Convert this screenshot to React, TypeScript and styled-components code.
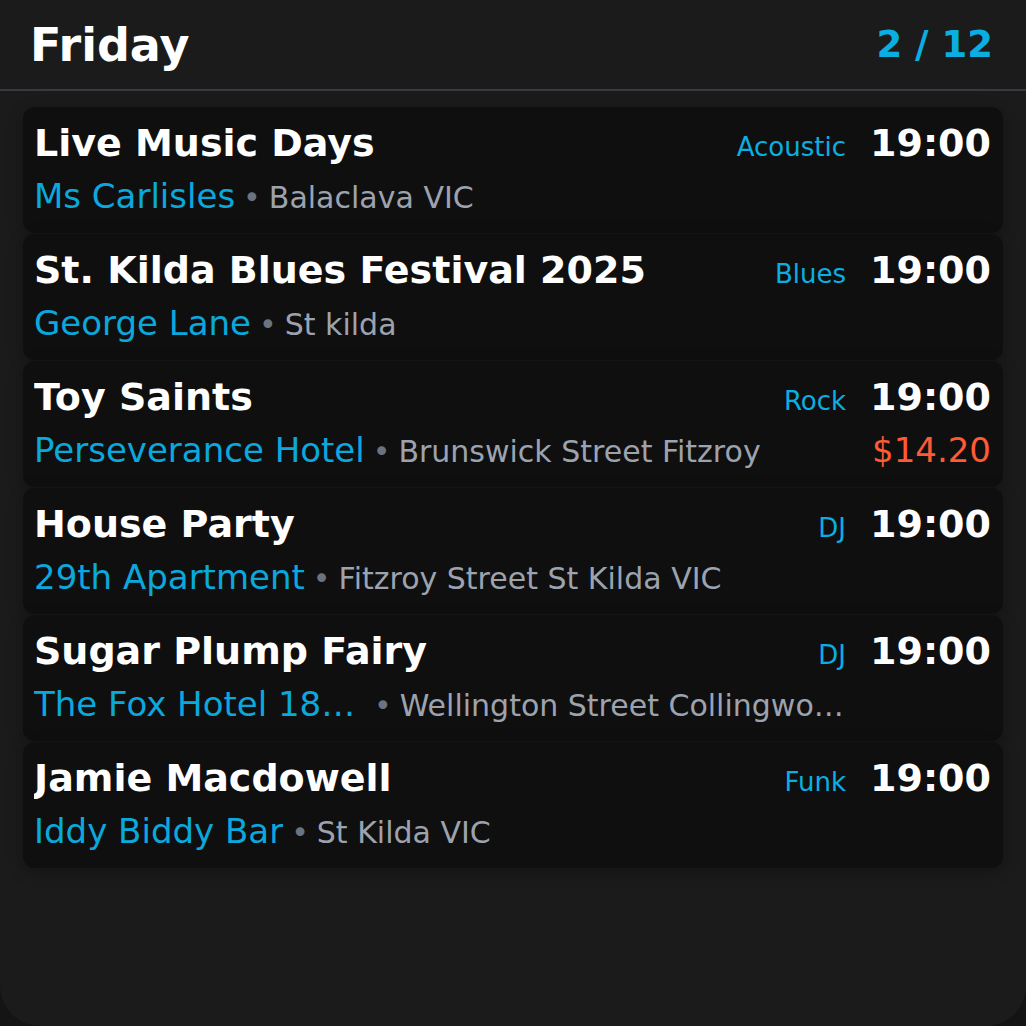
import React from "react";
import styled, { createGlobalStyle } from "styled-components";

const Global = createGlobalStyle`
  html, body { margin: 0; padding: 0; background: #141414; }
  body { font-family: "DejaVu Sans", "Noto Sans", sans-serif; }
  * { box-sizing: border-box; }
`;

const Screen = styled.div`
  width: 1026px;
  height: 1026px;
  background: #1b1b1b;
  border-radius: 0 0 40px 40px;
  overflow: hidden;
  display: flex;
  flex-direction: column;
`;

const Header = styled.header`
  height: 91px;
  flex: none;
  display: flex;
  align-items: center;
  justify-content: space-between;
  padding: 0 33px 0 30px;
  border-bottom: 2px solid #353a43;
`;

const Day = styled.h1`
  margin: 0;
  font-size: 46px;
  font-weight: 700;
  color: #ffffff;
`;

const Counter = styled.div`
  font-size: 37px;
  font-weight: 700;
  color: #0aaee0;
`;

const List = styled.div`
  display: flex;
  flex-direction: column;
  gap: 1px;
  padding: 16px 23px;
`;

const Card = styled.div`
  background: #0f0f0f;
  border-radius: 12px;
  padding: 14px 12px 17px 11px;
  display: flex;
  flex-direction: column;
  gap: 11px;
  box-shadow: 0 4px 16px rgba(0, 0, 0, 0.28);
`;

const TopRow = styled.div`
  display: flex;
  align-items: baseline;
  gap: 24px;
`;

const Title = styled.div`
  flex: 1;
  min-width: 0;
  font-size: 38px;
  font-weight: 700;
  color: #ffffff;
  white-space: nowrap;
  overflow: hidden;
  text-overflow: ellipsis;
`;

const Genre = styled.span`
  font-size: 26px;
  color: #0aaee0;
`;

const Time = styled.span`
  font-size: 38px;
  font-weight: 700;
  color: #ffffff;
`;

const BottomRow = styled.div`
  display: flex;
  align-items: baseline;
  gap: 16px;
`;

const Place = styled.div`
  flex: 1;
  min-width: 0;
  display: flex;
  align-items: baseline;
  gap: 8px;
  white-space: nowrap;
`;

const Venue = styled.span`
  flex: none;
  max-width: 332px;
  font-size: 34px;
  color: #0aa8dc;
  overflow: hidden;
  text-overflow: ellipsis;
`;

const Address = styled.span`
  flex: 1;
  min-width: 0;
  font-size: 30px;
  color: #9ca3af;
  overflow: hidden;
  text-overflow: ellipsis;
`;

const Dot = styled.span`
  color: #6b7280;
  margin-right: 8px;
`;

const Price = styled.span`
  flex: none;
  min-width: 130px;
  text-align: right;
  font-size: 34px;
  color: #ff5a36;
`;

type Event = {
  title: string;
  genre: string;
  time: string;
  venue: string;
  address: string;
  price?: string;
};

const events: Event[] = [
  { title: "Live Music Days", genre: "Acoustic", time: "19:00", venue: "Ms Carlisles", address: "Balaclava VIC" },
  { title: "St. Kilda Blues Festival 2025", genre: "Blues", time: "19:00", venue: "George Lane", address: "St kilda" },
  { title: "Toy Saints", genre: "Rock", time: "19:00", venue: "Perseverance Hotel", address: "Brunswick Street Fitzroy", price: "$14.20" },
  { title: "House Party", genre: "DJ", time: "19:00", venue: "29th Apartment", address: "Fitzroy Street St Kilda VIC" },
  { title: "Sugar Plump Fairy", genre: "DJ", time: "19:00", venue: "The Fox Hotel 18 Wellington St", address: "Wellington Street Collingwood VIC" },
  { title: "Jamie Macdowell", genre: "Funk", time: "19:00", venue: "Iddy Biddy Bar", address: "St Kilda VIC" },
];

export default function App() {
  return (
    <>
      <Global />
      <Screen>
        <Header>
          <Day>Friday</Day>
          <Counter>2 / 12</Counter>
        </Header>
        <List>
          {events.map((e) => (
            <Card key={e.title}>
              <TopRow>
                <Title>{e.title}</Title>
                <Genre>{e.genre}</Genre>
                <Time>{e.time}</Time>
              </TopRow>
              <BottomRow>
                <Place>
                  <Venue>{e.venue}</Venue>
                  <Address>
                    <Dot>•</Dot>
                    {e.address}
                  </Address>
                </Place>
                <Price>{e.price ?? ""}</Price>
              </BottomRow>
            </Card>
          ))}
        </List>
      </Screen>
    </>
  );
}
